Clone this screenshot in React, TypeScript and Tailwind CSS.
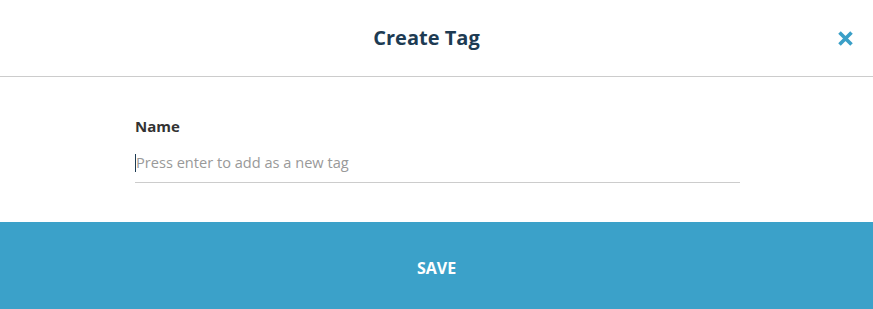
export default function App() {
  return (
    <div className="w-[873px] h-[309px] bg-white flex flex-col" style={{ fontFamily: '"Open Sans", sans-serif' }}>
      <div className="h-[77px] border-b border-[#cccccc] flex items-center justify-center relative shrink-0">
        <h1 className="text-[20px] font-bold text-[#1d3b53] leading-none -mt-[1px] mr-[20px]">Create Tag</h1>
        <button className="absolute left-[837px] top-[30px] w-[17px] h-[17px] text-[#3a9fc7]">
          <svg viewBox="0 0 17 17" width="17" height="17">
            <path d="M2.5 2.5 L14.5 14.5 M14.5 2.5 L2.5 14.5" stroke="currentColor" strokeWidth="3.6" strokeLinecap="butt" />
          </svg>
        </button>
      </div>
      <div className="flex-1 pl-[135px] pt-[38px]">
        <div className="w-[605px]">
          <label className="block text-[15px] font-bold text-[#333333] leading-[22px]">Name</label>
          <div className="h-[46px] border-b border-[#cccccc] flex items-center">
            <span className="w-[1px] h-[18px] bg-[#1d3b53] mt-[7px]"></span>
            <input
              className="flex-1 outline-none text-[14.6px] text-[#333] placeholder:text-[#999999] bg-transparent mt-[7px]"
              placeholder="Press enter to add as a new tag"
            />
          </div>
        </div>
      </div>
      <div className="h-[87px] bg-[#3ba1c9] flex items-center justify-center shrink-0">
        <span className="text-white font-bold text-[16px] mt-[5px]">SAVE</span>
      </div>
    </div>
  );
}
